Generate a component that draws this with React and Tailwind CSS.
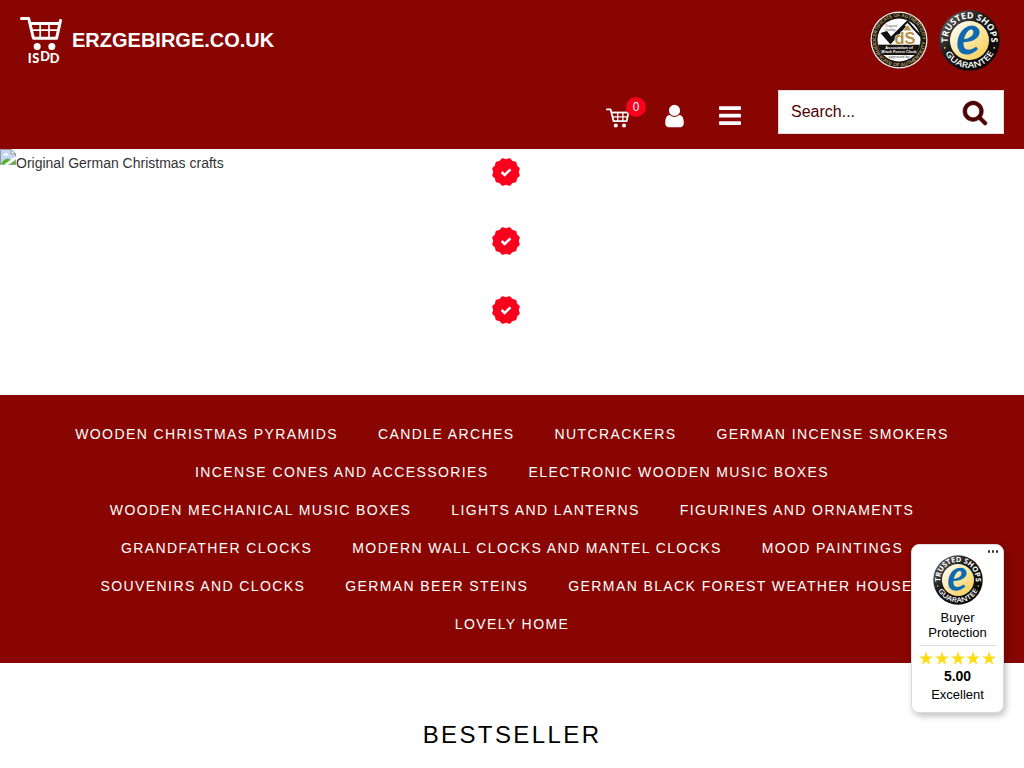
import React from 'react';

const navRows = [
  ['Wooden Christmas Pyramids', 'Candle Arches', 'Nutcrackers', 'German Incense Smokers'],
  ['Incense Cones and Accessories', 'Electronic Wooden Music Boxes'],
  ['Wooden Mechanical Music Boxes', 'Lights and Lanterns', 'Figurines and Ornaments'],
  ['Grandfather Clocks', 'Modern Wall Clocks and Mantel Clocks', 'Mood Paintings'],
  ['Souvenirs and Clocks', 'German Beer Steins', 'German Black Forest Weather Houses'],
  ['Lovely Home'],
];

// wavy outline with 12 bumps, valley at the top
const sealPoints = Array.from({ length: 144 }, (_, i) => {
  const a = (i / 144) * Math.PI * 2;
  const r = 13.5 - 0.65 * Math.cos(12 * a);
  return `${(14 + r * Math.sin(a)).toFixed(2)},${(14 - r * Math.cos(a)).toFixed(2)}`;
}).join(' ');

function Logo() {
  return (
    <svg className="h-[48px] w-[43px] shrink-0 overflow-visible" viewBox="0 0 43 48" fill="none">
      <path d="M1.5 2.500H8.700L13.400 22.200H36.600L40.500 4.500" stroke="#fff" strokeWidth="3" strokeLinecap="round" strokeLinejoin="round" />
      <path d="M10 7.500H40" stroke="#fff" strokeWidth="3" />
      <path d="M11.500 14.200H38.500M20.200 7V22M29 7V22" stroke="#fff" strokeWidth="1.700" />
      <circle cx="17.200" cy="30.600" r="3.500" fill="#fff" />
      <circle cx="31.800" cy="30.600" r="3.500" fill="#fff" />
      <text x="7.700 12.300 20.300 29.800" y="47 47 44.600 47" fill="#fff" fontFamily="Lato, sans-serif" fontWeight="900" fontSize="12.800">ISDD</text>
    </svg>
  );
}

function CartIcon() {
  return (
    <svg className="h-[20px] w-[24px]" viewBox="0 0 24 20" fill="none" stroke="#fff">
      <path d="M.9 1.400H4.600L7.600 13.200H20.600L22.500 4.500" strokeWidth="1.800" strokeLinecap="round" strokeLinejoin="round" />
      <path d="M5.500 4.500H22.700" strokeWidth="1.800" />
      <path d="M7 8.800H22M11.700 4.500V13M16.900 4.500V13" strokeWidth="1.300" />
      <circle cx="9.800" cy="17.400" r="2" fill="#fff" stroke="none" />
      <circle cx="18" cy="17.400" r="2" fill="#fff" stroke="none" />
    </svg>
  );
}

function UserIcon() {
  return (
    <svg className="h-[26px] w-[19px]" viewBox="0 0 1280 1792" fill="#fff">
      <path d="M1280 1399q0 109-62.5 187t-150.5 78h-854q-88 0-150.5-78t-62.5-187q0-85 8.5-160.5t31.5-152 58.5-131 94-89 134.5-34.5q131 128 313 128t313-128q76 0 134.5 34.5t94 89 58.5 131 31.5 152 8.5 160.5zm-256-887q0 159-112.5 271.5t-271.5 112.5-271.5-112.5-112.5-271.5 112.5-271.5 271.5-112.5 271.5 112.5 112.5 271.5z" />
    </svg>
  );
}

function BarsIcon() {
  return (
    <svg className="h-[20px] w-[22px]" viewBox="0 0 22 20" fill="#fff">
      <rect y="0.2" width="22" height="3.8" rx="0.9" />
      <rect y="7.8" width="22" height="3.8" rx="0.9" />
      <rect y="15.2" width="22" height="3.8" rx="0.9" />
    </svg>
  );
}

function SearchIcon() {
  return (
    <svg className="h-[26px] w-[24px] overflow-visible" viewBox="0 0 1664 1792" fill="#4d0000" stroke="#4d0000" strokeWidth="40">
      <path d="M1152 704q0-185-131.5-316.5t-316.5-131.5-316.5 131.5-131.5 316.5 131.5 316.5 316.5 131.5 316.5-131.5 131.5-316.5zm512 832q0 52-38 90t-90 38q-54 0-90-38l-343-342q-179 124-399 124-143 0-273.5-55.5t-225-150-150-225-55.5-273.5 55.5-273.5 150-225 225-150 273.5-55.5 273.5 55.5 225 150 150 225 55.5 273.5q0 220-124 399l343 343q37 37 37 90z" />
    </svg>
  );
}

function TrustedShops({ id, className }) {
  return (
    <svg className={className} viewBox="0 0 100 100">
      <defs>
        <linearGradient id={`${id}-ring`} x1="0" y1="0" x2="1" y2="1">
          <stop offset="0" stopColor="#777" />
          <stop offset="0.4" stopColor="#1b1b1b" />
          <stop offset="1" stopColor="#000" />
        </linearGradient>
        <linearGradient id={`${id}-gold`} x1="0.1" y1="0.1" x2="0.9" y2="0.9">
          <stop offset="0" stopColor="#fffdf2" />
          <stop offset="1" stopColor="#f9cf58" />
        </linearGradient>
        <path id={`${id}-top`} d="M15.500 58A35.500 35.500 0 1 1 84.500 58" />
        <path id={`${id}-bottom`} d="M5 50A45 45 0 0 0 95 50" />
      </defs>
      <circle cx="50" cy="50" r="49.500" fill={`url(#${id}-ring)`} />
      <circle cx="50" cy="50" r="32" fill={`url(#${id}-gold)`} />
      <g fill="#fff" fontFamily="'Open Sans', sans-serif" fontWeight="700" textAnchor="middle">
        <text fontSize="14.500" textLength="119" lengthAdjust="spacingAndGlyphs">
          <textPath href={`#${id}-top`} startOffset="50%">TRUSTED SHOPS</textPath>
        </text>
        <text fontSize="13.500" fontWeight="600" textLength="98" lengthAdjust="spacingAndGlyphs">
          <textPath href={`#${id}-bottom`} startOffset="50%">GUARANTEE</textPath>
        </text>
      </g>
      <circle cx="9.500" cy="62" r="1.500" fill="#f9cf58" />
      <circle cx="90.500" cy="62" r="1.500" fill="#f9cf58" />
      <text transform="translate(48 70) scale(1.080 1.160)" textAnchor="middle" fontFamily="'Liberation Serif', serif" fontStyle="italic" fontSize="80" fill="#0e6ab0" stroke="#0e6ab0" strokeWidth="2.500">e</text>
    </svg>
  );
}

function ClockSeal() {
  return (
    <svg className="h-[58px] w-[58px]" viewBox="0 0 58 58">
      <defs>
        <path id="seal-top" d="M5.800 29A23.200 23.200 0 0 1 52.200 29" />
        <path id="seal-bottom" d="M2.500 29A26.500 26.500 0 0 0 55.500 29" />
        <clipPath id="seal-inner"><circle cx="29" cy="29" r="21.500" /></clipPath>
      </defs>
      <circle cx="29" cy="29" r="28.500" fill="#f7f3f1" />
      <circle cx="29" cy="29" r="27.300" fill="#17130f" />
      <circle cx="29" cy="29" r="21.500" fill="#fff" />
      <g fill="#b89a62" fontFamily="'Liberation Sans', sans-serif" fontWeight="700" fontSize="5">
        <text textLength="72" lengthAdjust="spacingAndGlyphs"><textPath href="#seal-top">CERTIFICATE OF AUTHENTICITY</textPath></text>
        <text textLength="81" lengthAdjust="spacingAndGlyphs"><textPath href="#seal-bottom">CERTIFICATE OF AUTHENTICITY</textPath></text>
      </g>
      <g clipPath="url(#seal-inner)">
        <rect x="7" y="33.700" width="44" height="10.300" fill="#17130f" />
      </g>
      <path d="M21 27L37.500 10.500L51 25.500" fill="none" stroke="#111" strokeWidth="1.900" />
      <path d="M10.500 22L17 20L21.500 26L34 14L36 15.500L20.500 33.500Z" fill="#111" />
      <path d="M33.500 19.500L37.500 14L41.500 19.500Z" fill="#bd9147" />
      <text x="24.500" y="33.300" fontFamily="'Liberation Sans', sans-serif" fontWeight="700" fontSize="17" textLength="21" lengthAdjust="spacingAndGlyphs" fill="#bd9147" stroke="#fff" strokeWidth="1" paintOrder="stroke">dS</text>
      <g fontFamily="'Liberation Sans', sans-serif" textAnchor="middle">
        <text x="21" y="15.800" fontSize="3.600" fill="#555">Original</text>
        <text x="20" y="20" fontSize="3.600" fill="#555">Quality</text>
        <text x="29" y="37.800" fontSize="4" fontWeight="700" fill="#fff">Association of</text>
        <text x="29" y="42.400" fontSize="4" fontWeight="700" fill="#fff" textLength="35" lengthAdjust="spacingAndGlyphs">Black Forest Clock</text>
        <text x="29" y="47.200" fontSize="3.800" fill="#444">approved by</text>
      </g>
    </svg>
  );
}

function CheckSeal() {
  return (
    <svg className="h-[28px] w-[28px]" viewBox="0 0 28 28">
      <polygon fill="#fb001d" points={sealPoints} />
      <path d="M9.600 14L12.700 17L18.500 11.300" fill="none" stroke="#fff" strokeWidth="2.500" />
    </svg>
  );
}

function BrokenImage() {
  return (
    <svg className="h-[16px] w-[16px] shrink-0" viewBox="0 0 16 16">
      <path d="M0 .5H11L15.500 5V9L5 16H0Z" fill="#c4d6f5" />
      <path d="M.5 15.500V.5H11L15.500 5V8.500" fill="none" stroke="#999" />
      <path d="M11 .5V5H15.500Z" fill="#fff" stroke="#999" />
      <path d="M3 6.500Q3 4.500 5 4.700Q6 3 7.300 4.700Q9 5 8.500 6.500Z" fill="#fff" />
      <path d="M1 15Q4 9.500 8 9.500L11 11L5.500 15.500H1Z" fill="#52b32c" />
      <path d="M5 16L16 8" stroke="#fff" strokeWidth="1.800" />
      <path d="M9 15.500H15.500V11Z" fill="#52b32c" />
      <path d="M8.500 15.500H15.500V10.500" fill="none" stroke="#999" />
    </svg>
  );
}

function Star() {
  return (
    <svg className="h-[14px] w-[14px]" viewBox="0 0 20 19" fill="#ffdc0f">
      <path d="M10 0L12.400 7.200H20L13.900 11.700L16.200 19L10 14.500L3.800 19L6.100 11.700L0 7.200H7.600Z" />
    </svg>
  );
}

function TrustBadge() {
  return (
    <div className="absolute left-[911px] top-[544px] flex h-[169px] w-[93px] flex-col items-center rounded-lg border border-[#ddd] bg-white text-[13px] leading-[15px] text-black shadow-[2px_3px_6px_rgba(0,0,0,0.25)]">
      <div className="flex h-[10px] w-full items-center justify-end gap-[1.500px] pr-[5px] pt-[3px]">
        <span className="h-[2.500px] w-[2.500px] rounded-full bg-[#333]" />
        <span className="h-[2.500px] w-[2.500px] rounded-full bg-[#333]" />
        <span className="h-[2.500px] w-[2.500px] rounded-full bg-[#333]" />
      </div>
      <TrustedShops id="widget" className="h-[50px] w-[50px]" />
      <div className="mt-[5px] text-center">Buyer<br />Protection</div>
      <div className="mt-[5px] h-px w-[77px] bg-[#ddd]" />
      <div className="mt-[5px] flex gap-[1.7px]">
        {[1, 2, 3, 4, 5].map((n) => <Star key={n} />)}
      </div>
      <div className="mt-[4px] text-[14px] font-bold">5.00</div>
      <div className="mt-[3px]">Excellent</div>
    </div>
  );
}

export default function App() {
  return (
    <div className="relative h-[768px] w-[1024px] overflow-hidden bg-white font-['Liberation_Sans',Arial,sans-serif]">
      <header className="h-[149px] bg-[#880502]">
        <div className="flex h-[80px] items-center justify-between pl-[20px] pr-[24px]">
          <div className="flex items-center gap-[9px]">
            <Logo />
            <span className="text-[20px] font-bold leading-none text-white">ERZGEBIRGE.CO.UK</span>
          </div>
          <div className="flex items-center gap-[11px]">
            <ClockSeal />
            <TrustedShops id="header" className="h-[61px] w-[61px]" />
          </div>
        </div>
        <div className="flex justify-end pr-[20px] pt-[10px]">
          <div className="flex h-[44px] items-center pt-[8px]">
            <div className="relative mr-[35px] mt-[3px]">
              <CartIcon />
              <span className="absolute -top-[11px] left-[20px] flex h-[20px] w-[20px] items-center justify-center rounded-full bg-[#fb001d] text-[12px] text-white">0</span>
            </div>
            <div className="mr-[35px] -mt-[1px]"><UserIcon /></div>
            <div className="mr-[37px] -mt-[1px]"><BarsIcon /></div>
          </div>
          <div className="flex h-[44px] w-[226px] items-center justify-between border border-[#ddd] bg-white pl-[12px] pr-[16px] text-[16px] text-[#4d0000]">
            <span>Search...</span>
            <div className="mt-[3px]"><SearchIcon /></div>
          </div>
        </div>
      </header>

      <section className="grid h-[246px] grid-cols-[492px_1fr]">
        <div className="flex items-start text-[14px] leading-[20px] text-[#333]">
          <BrokenImage />
          <span className="pt-[4px]">Original German Christmas crafts</span>
        </div>
        <div className="flex flex-col gap-[41px] pt-[9px]">
          <CheckSeal />
          <CheckSeal />
          <CheckSeal />
        </div>
      </section>

      <nav className="h-[268px] bg-[#880502] py-[20px] text-[14px] uppercase tracking-[1.4px] text-white">
        {navRows.map((row) => (
          <div key={row[0]} className="flex h-[38px] items-center justify-center gap-[40px]">
            {row.map((item) => (
              <a key={item} href="#" className="whitespace-nowrap">{item}</a>
            ))}
          </div>
        ))}
      </nav>

      <h2 className="mt-[54px] text-center text-[24px] leading-[36px] tracking-[2.4px] text-black">BESTSELLER</h2>

      <TrustBadge />
    </div>
  );
}
